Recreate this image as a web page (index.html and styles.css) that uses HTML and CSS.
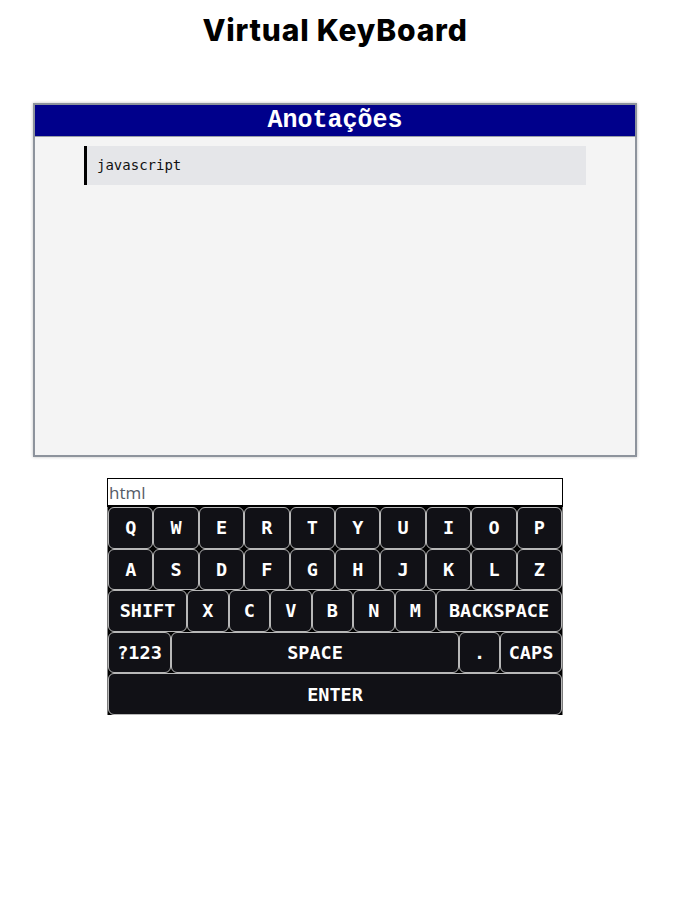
FILE: index.html
```html
<!DOCTYPE html>
<html lang="pt">
<head>
<meta charset="utf-8">
<title>Virtual KeyBoard</title>
<link rel="stylesheet" href="styles.css">
</head>
<body>
<h1 class="title">Virtual KeyBoard</h1>
<section class="notes">
  <div class="notes-head">Anotações</div>
  <div class="notes-body">
    <div class="note">javascript</div>
  </div>
</section>
<div class="kb">
  <input class="kb-input" type="text" value="html">
  <div class="keys">
    <div class="row">
      <button class="key">Q</button><button class="key">W</button><button class="key">E</button><button class="key">R</button><button class="key">T</button><button class="key">Y</button><button class="key">U</button><button class="key">I</button><button class="key">O</button><button class="key">P</button>
    </div>
    <div class="row">
      <button class="key">A</button><button class="key">S</button><button class="key">D</button><button class="key">F</button><button class="key">G</button><button class="key">H</button><button class="key">J</button><button class="key">K</button><button class="key">L</button><button class="key">Z</button>
    </div>
    <div class="row">
      <button class="key key-shift">SHIFT</button><button class="key">X</button><button class="key">C</button><button class="key">V</button><button class="key">B</button><button class="key">N</button><button class="key">M</button><button class="key key-back">BACKSPACE</button>
    </div>
    <div class="row">
      <button class="key key-num">?123</button><button class="key key-space">SPACE</button><button class="key key-dot">.</button><button class="key key-caps">CAPS</button>
    </div>
    <div class="row">
      <button class="key">ENTER</button>
    </div>
  </div>
</div>
</body>
</html>
```
FILE: styles.css
```css
html, body {
  margin: 0;
  padding: 0;
  background: #ffffff;
}
body {
  padding: 0 8px;
}
.title {
  margin: 0;
  padding-top: 12px;
  height: 103px;
  box-sizing: border-box;
  text-align: center;
  font-family: Inter, "Noto Sans", sans-serif;
  font-weight: 800;
  font-size: 30px;
  line-height: 36px;
  letter-spacing: 0.8px;
  color: #000;
  padding-right: 3px;
}
.notes {
  width: 600px;
  height: 350px;
  margin-left: 25px;
  border: 2px solid #8d939c;
  box-shadow: 0 0 3px rgba(0,0,0,0.25);
  background: #f4f4f4;
  display: flex;
  flex-direction: column;
}
.notes-head {
  height: 31px;
  background: #00008b;
  color: #fff;
  text-align: center;
  font-family: "Liberation Mono", "Courier New", monospace;
  font-weight: bold;
  font-size: 25px;
  line-height: 31px;
  border-bottom: 1px solid #9aa0a8;
}
.notes-body {
  padding-top: 9px;
  display: flex;
  flex-direction: column;
  align-items: center;
}
.note {
  width: 502px;
  height: 39px;
  box-sizing: border-box;
  background: #e5e6e9;
  border-left: 3px solid #000;
  padding-left: 10px;
  font-family: "DejaVu Sans Mono", monospace;
  font-size: 14px;
  line-height: 39px;
  color: #111;
}
.kb {
  width: 456px;
  margin-left: 99px;
  margin-top: 21px;
  display: flex;
  flex-direction: column;
}
.kb-input {
  height: 29px;
  box-sizing: border-box;
  margin: 0;
  border: 1px solid #000;
  border-bottom-width: 2px;
  padding: 0 1px;
  font-family: "Open Sans", sans-serif;
  font-size: 17px;
  color: #555b66;
  outline: none;
}
.keys {
  background: #000;
  display: flex;
  flex-direction: column;
  border-left: 1px solid #7c7c7c;
  border-right: 1px solid #7c7c7c;
}
.row {
  display: flex;
  height: 41.6px;
}
.key {
  flex: 1 1 0;
  min-width: 0;
  margin: 0;
  padding: 0;
  box-sizing: border-box;
  background: #111116;
  color: #fff;
  border: 1.5px solid #b8b8b8;
  border-radius: 6px;
  font-family: "DejaVu Sans Mono", monospace;
  font-weight: bold;
  font-size: 18.5px;
  cursor: pointer;
}
.key-shift { flex: 0 0 79px; }
.key-back { flex: 0 0 126px; }
.key-num { flex: 0 0 63px; }
.key-dot { flex: 0 0 41px; }
.key-caps { flex: 0 0 62px; }
.key-space { flex: 1 1 0; }
```
